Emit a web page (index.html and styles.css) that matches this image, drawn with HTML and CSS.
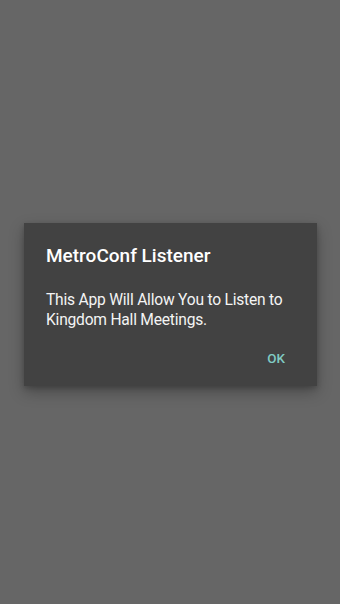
FILE: index.html
```html
<!DOCTYPE html>
<html>
<head>
<meta charset="utf-8">
<link rel="stylesheet" href="styles.css">
</head>
<body>
<div class="screen">
  <div class="dialog">
    <div class="title">MetroConf Listener</div>
    <div class="message">This App Will Allow You to Listen to Kingdom Hall Meetings.</div>
    <div class="actions"><span class="btn">OK</span></div>
  </div>
</div>
</body>
</html>
```
FILE: styles.css
```css
html, body {
  margin: 0;
  padding: 0;
  background: #666666;
}
.screen {
  width: 340px;
  height: 604px;
  display: flex;
  justify-content: flex-start;
  padding: 223px 0 0 24px;
  box-sizing: border-box;
  font-family: Roboto, "Noto Sans", sans-serif;
}
.dialog {
  width: 293px;
  height: 163px;
  background: #424242;
  box-sizing: border-box;
  padding: 21px 22px 0 22px;
  box-shadow: 0 6px 14px rgba(0,0,0,0.28), 0 2px 5px rgba(0,0,0,0.18);
}
.title {
  font-size: 19px;
  line-height: 24px;
  font-weight: 500;
  color: #ffffff;
}
.message {
  margin-top: 22px;
  font-size: 15.6px;
  letter-spacing: -0.22px;
  line-height: 20px;
  color: #f4f4f4;
}
.actions {
  display: flex;
  justify-content: flex-end;
  margin-top: 21px;
  padding-right: 10px;
}
.btn {
  font-size: 13.4px;
  line-height: 16px;
  font-weight: 500;
  color: #80cbc4;
}
```
